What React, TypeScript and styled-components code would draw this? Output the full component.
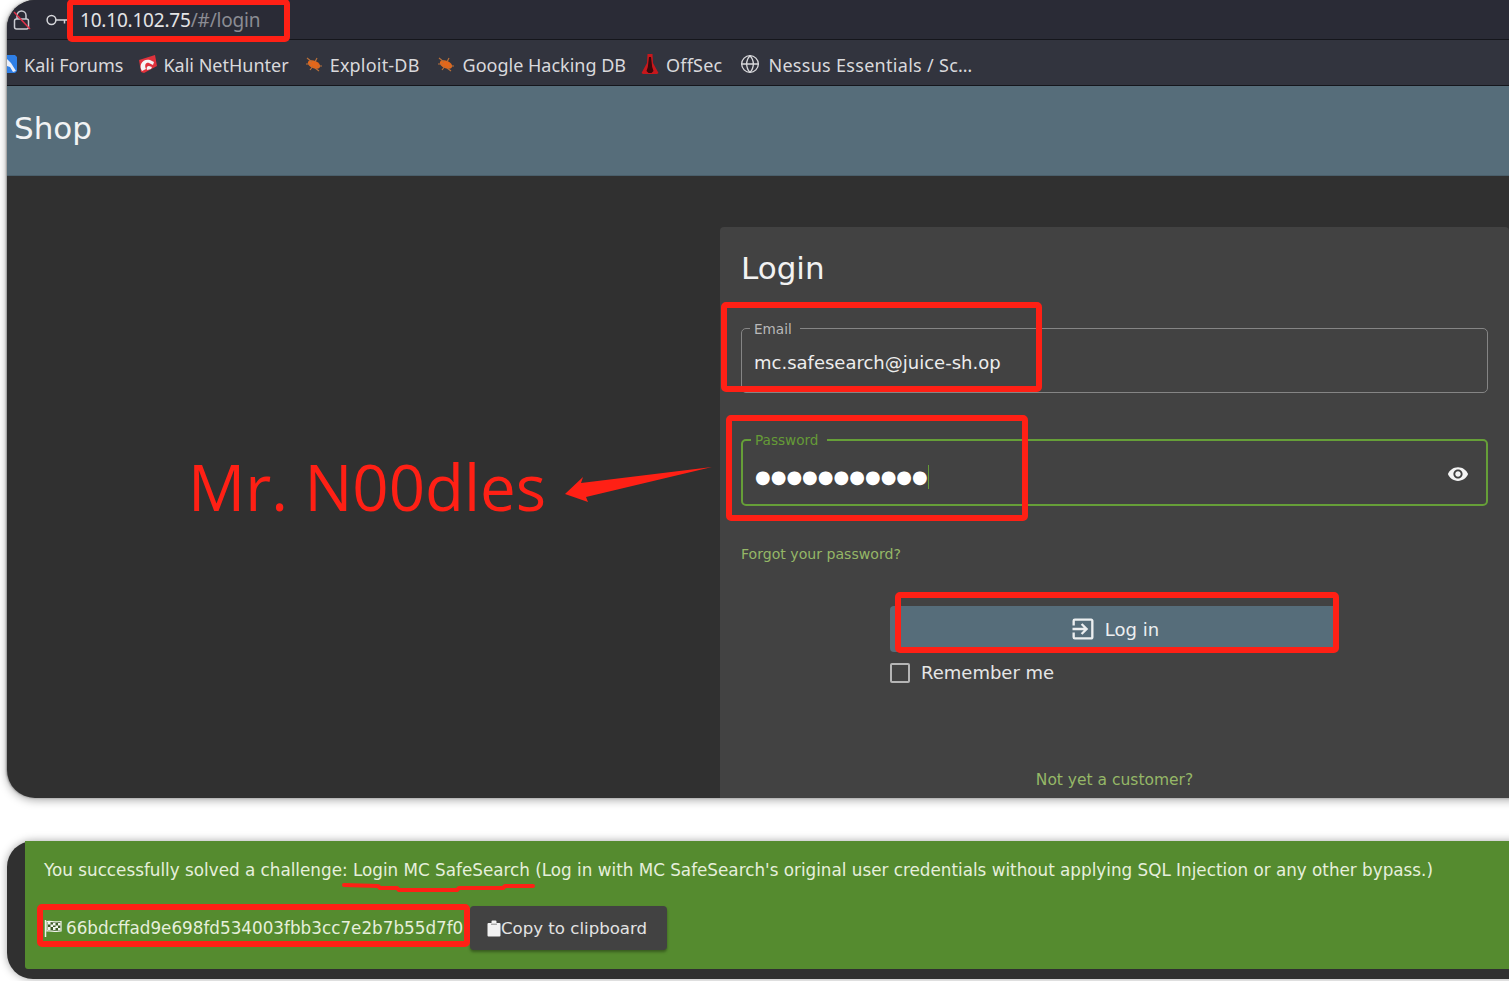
import React from "react";
import styled, { createGlobalStyle } from "styled-components";
import { Globe } from "lucide-react";
import { MdExitToApp, MdVisibility } from "react-icons/md";

const GlobalStyle = createGlobalStyle`
  html, body {
    margin: 0;
    padding: 0;
    background: #fff;
  }
  * {
    box-sizing: border-box;
  }
`;

const Page = styled.div`
  position: relative;
  width: 1509px;
  height: 981px;
  overflow: hidden;
  background: #fff;
  font-family: "DejaVu Sans", sans-serif;
  display: flex;
  flex-direction: column;
  gap: 43px;
  padding-left: 7px;
`;

const TopWindow = styled.div`
  height: 798px;
  width: 1540px;
  flex: none;
  display: flex;
  flex-direction: column;
  overflow: hidden;
  background: #303030;
  border-radius: 28px 0 0 28px;
  box-shadow: 0 2px 10px rgba(0, 0, 0, 0.35), -1px 0 2px rgba(0, 0, 0, 0.3);
`;

const AddressBar = styled.div`
  height: 40px;
  flex: none;
  display: flex;
  align-items: center;
  padding-left: 5px;
  background: #2a2b36;
  border-bottom: 1px solid #15161c;
`;

const UrlText = styled.span`
  margin-left: 12px;
  font-family: "Noto Sans", sans-serif;
  font-size: 19px;
  letter-spacing: -0.2px;
  color: #8b8c93;
`;

const UrlHost = styled.span`
  color: #e4e4e6;
`;

const BookmarkBar = styled.div`
  height: 46px;
  flex: none;
  display: flex;
  align-items: center;
  padding-top: 4px;
  background: #32343e;
  border-bottom: 1px solid #15161c;
`;

const Bookmark = styled.span<{ $gap: number; $iconGap?: number; $track?: number }>`
  display: flex;
  align-items: center;
  gap: ${(p) => p.$iconGap ?? 7}px;
  margin-right: ${(p) => p.$gap}px;
  font-family: "Noto Sans", sans-serif;
  font-size: 18px;
  letter-spacing: ${(p) => p.$track ?? 0}px;
  color: #d9d9dc;
  white-space: nowrap;

  svg {
    margin-top: -2px;
  }
`;

const ShopBar = styled.div`
  height: 90px;
  flex: none;
  display: flex;
  align-items: center;
  padding: 0 0 6px 7px;
  background: #566d7a;
  border-bottom: 1px solid #4a5f6b;
  color: #f1f3f4;
  font-size: 31px;
`;

const Content = styled.div`
  flex: 1;
  display: flex;
  padding: 51px 0 0 713px;
`;

const Card = styled.div`
  width: 789px;
  display: flex;
  flex-direction: column;
  padding: 21px 21px 0;
  background: #424242;
  border-radius: 4px 4px 0 0;
`;

const CardTitle = styled.div`
  font-size: 31px;
  line-height: 40px;
  color: #f2f2f2;
`;

const Field = styled.fieldset<{ $focused?: boolean }>`
  margin: ${(p) => (p.$focused ? "38px" : "32px")} 0 0;
  padding: ${(p) => (p.$focused ? "17px" : "15px")} 12px 0;
  height: ${(p) => (p.$focused ? "75px" : "73px")};
  min-width: 0;
  display: flex;
  align-items: flex-start;
  justify-content: space-between;
  border: ${(p) => (p.$focused ? "2px solid #669f38" : "1px solid #858585")};
  border-radius: 5px;
`;

const FieldLabel = styled.legend<{ $focused?: boolean }>`
  margin-left: -4px;
  padding: 2px 8px 0 4px;
  font-size: 13.6px;
  line-height: 15px;
  color: ${(p) => (p.$focused ? "#659b37" : "#b9b9b9")};
`;

const FieldValue = styled.div`
  display: flex;
  align-items: center;
  font-size: 18px;
  color: #ededed;
`;

const PasswordDots = styled(FieldValue)`
  color: #fff;
  border-right: 1px solid #659b37;
  line-height: 24px;
`;

const EyeButton = styled.span`
  display: flex;
  margin: -2px 5px 0 0;
  color: #f4f4f4;
`;

const ForgotLink = styled.div`
  margin-top: 40px;
  font-size: 14.1px;
  line-height: 17px;
  color: #95b767;
`;

const LoginColumn = styled.div`
  width: 448px;
  margin: 43px 0 0 149px;
  display: flex;
  flex-direction: column;
`;

const LoginButton = styled.div`
  height: 46px;
  display: flex;
  align-items: center;
  justify-content: center;
  gap: 8px;
  background: #566d7a;
  border-radius: 4px;
  color: #eceff0;
  font-size: 18px;
`;

const RememberRow = styled.div`
  margin-top: 10px;
  display: flex;
  align-items: center;
  gap: 11px;
  font-size: 18px;
  color: #e6e6e6;
`;

const CheckBox = styled.span`
  width: 20px;
  height: 20px;
  border: 2px solid #b5b5b5;
  border-radius: 2px;
`;

const CustomerLink = styled.div`
  margin-top: 88px;
  text-align: center;
  font-size: 15.5px;
  color: #95b767;
`;

const BottomWindow = styled.div`
  height: 138px;
  width: 1540px;
  flex: none;
  background: #303030;
  border-radius: 26px 0 0 26px;
  padding-left: 18px;
  box-shadow: 0 0 8px rgba(0, 0, 0, 0.35);
`;

const Toast = styled.div`
  height: 128px;
  width: 1490px;
  padding: 19px 0 0 19px;
  background: #558b2f;
  border-radius: 0 0 0 3px;
  color: #e6efdc;
  font-size: 16.8px;
`;

const ToastText = styled.div`
  line-height: 21px;
  white-space: nowrap;
`;

const FlagRow = styled.div`
  margin-top: 25px;
  display: flex;
  align-items: center;
`;

const FlagCode = styled.span`
  display: flex;
  align-items: center;
  gap: 4px;
  width: 426px;
`;

const CopyButton = styled.div`
  width: 197px;
  height: 44px;
  display: flex;
  align-items: center;
  padding-left: 17px;
  background: #424242;
  border-radius: 4px;
  box-shadow: 0 2px 3px rgba(0, 0, 0, 0.35);
  color: #e3e3e3;
  font-size: 16.6px;
`;

/* annotations drawn over the screenshot */
const RedBox = styled.div<{ $x: number; $y: number; $w: number; $h: number }>`
  position: absolute;
  left: ${(p) => p.$x}px;
  top: ${(p) => p.$y}px;
  width: ${(p) => p.$w}px;
  height: ${(p) => p.$h}px;
  border: 6px solid #ff2015;
  border-radius: 5px;
`;

const RedName = styled.div`
  position: absolute;
  left: 188px;
  top: 444px;
  font-family: "Open Sans", sans-serif;
  font-size: 63.6px;
  line-height: 86px;
  color: #ff2015;
  white-space: nowrap;
`;

const Overlay = styled.svg`
  position: absolute;
  left: 0;
  top: 0;
  pointer-events: none;
`;

const LockIcon = () => (
  <svg width="20" height="22" viewBox="0 0 20 22">
    <path d="M5 10V6.5a4.5 4.5 0 0 1 9 0V10" fill="none" stroke="#c9cad0" strokeWidth="1.5" />
    <rect x="2.500" y="10" width="14" height="10" rx="2" fill="none" stroke="#c9cad0" strokeWidth="1.5" />
    <path d="M2 3l16 17" stroke="#e0324a" strokeWidth="1.5" />
  </svg>
);

const KeyIcon = () => (
  <svg width="22" height="12" viewBox="0 0 22 12" style={{ marginLeft: 14 }}>
    <circle cx="5.5" cy="6" r="4.4" fill="none" stroke="#d5d6da" strokeWidth="1.5" />
    <path d="M10 6H21M18.500 6v3.500" fill="none" stroke="#d5d6da" strokeWidth="1.5" />
  </svg>
);

const ForumsIcon = () => (
  <svg width="10" height="20" viewBox="0 0 10 20">
    <path d="M0 1h8l2 2v14l-2 2H0z" fill="#2f7fe6" />
    <path d="M0 5l4 4 5 8-3 1-3-5-3-1z" fill="#e9eefa" />
  </svg>
);

const NetHunterIcon = () => (
  <svg width="20" height="20" viewBox="0 0 20 20">
    <path d="M1 6L17 1l2 11-13 7-3-1z" fill="#e0323c" />
    <path d="M4 17C0 11 5 4 12 6l4 2-1 3-4-2c-3-1-5 2-3 6z" fill="#f5f5f5" />
    <path d="M9 16c-1-2 0-4 2-4l3 1-1 2z" fill="#f5f5f5" />
  </svg>
);

const BugIcon = () => (
  <svg width="18" height="16" viewBox="0 0 18 16">
    <ellipse cx="9" cy="8.5" rx="6.5" ry="3.8" transform="rotate(22 9 8.500)" fill="#e4671a" />
    <path d="M2 2l5 4M1 8h5M14 15l-4-3M17 10h-5M5 14l3-4M12 2l-2 4" stroke="#b9703a" strokeWidth="1.2" />
  </svg>
);

const OffSecIcon = () => (
  <svg width="18" height="22" viewBox="0 0 18 22">
    <path d="M6.500 1h5l.5 9 5.500 10-1.500 1H2l-1.500-1L6 10z" fill="#c8171c" />
    <path d="M8 4h2l1.200 10 1.300 4-2 2H7.500l-2-2 1.300-4z" fill="#3a0a0c" />
  </svg>
);

const CheckeredFlag = () => (
  <svg width="18" height="17" viewBox="0 0 18 17">
    <path d="M1.500 0v17" stroke="#eef3ea" strokeWidth="1.5" />
    <path d="M3 1.500c4-1 7 1.500 14 0v9.500c-7 1.500-10-1-14 0z" fill="#3d5c27" stroke="#f1f5ed" strokeWidth="1.2" />
    <path d="M4 2h2.500v2.500H4zM9 3h2.500v2.500H9zM14 3h2.500v2.500H14zM6.500 4.500H9V7H6.500zM11.500 5.500H14V8h-2.500zM4 7h2.500v3H4zM9 7h2.500v3H9zM14 8h2.500v2.500H14z" fill="#f1f5ed" />
  </svg>
);

const ClipboardIcon = () => (
  <svg width="14" height="17" viewBox="0 0 14 17">
    <path d="M1.500 3H4.500V1.500a1 1 0 0 1 1-1h3a1 1 0 0 1 1 1V3h3a1 1 0 0 1 1 1v11.500a1 1 0 0 1-1 1h-11a1 1 0 0 1-1-1V4a1 1 0 0 1 1-1z" fill="#f2f2f2" />
    <path d="M4 4.200h6" stroke="#8a8a8a" strokeWidth="1" />
  </svg>
);

const App = () => {
  return (
    <Page>
      <GlobalStyle />
      <TopWindow>
        <AddressBar>
          <LockIcon />
          <KeyIcon />
          <UrlText>
            <UrlHost>10.10.102.75</UrlHost>/#/login
          </UrlText>
        </AddressBar>
        <BookmarkBar>
          <Bookmark $gap={15}>
            <ForumsIcon />
            Kali Forums
          </Bookmark>
          <Bookmark $gap={16} $iconGap={5}>
            <NetHunterIcon />
            Kali NetHunter
          </Bookmark>
          <Bookmark $gap={17} $iconGap={7} $track={0.2}>
            <BugIcon />
            Exploit-DB
          </Bookmark>
          <Bookmark $gap={15} $iconGap={8}>
            <BugIcon />
            Google Hacking DB
          </Bookmark>
          <Bookmark $gap={18} $track={0.2}>
            <OffSecIcon />
            OffSec
          </Bookmark>
          <Bookmark $gap={0} $iconGap={8} $track={0.3}>
            <Globe size={20} strokeWidth={1.6} />
            Nessus Essentials / Sc…
          </Bookmark>
        </BookmarkBar>
        <ShopBar>Shop</ShopBar>
        <Content>
          <Card>
            <CardTitle>Login</CardTitle>
            <Field>
              <FieldLabel>Email</FieldLabel>
              <FieldValue>mc.safesearch@juice-sh.op</FieldValue>
            </Field>
            <Field $focused>
              <FieldLabel $focused>Password</FieldLabel>
              <PasswordDots>●●●●●●●●●●●</PasswordDots>
              <EyeButton>
                <MdVisibility size={22} />
              </EyeButton>
            </Field>
            <ForgotLink>Forgot your password?</ForgotLink>
            <LoginColumn>
              <LoginButton>
                <MdExitToApp size={28} />
                Log in
              </LoginButton>
              <RememberRow>
                <CheckBox />
                Remember me
              </RememberRow>
            </LoginColumn>
            <CustomerLink>Not yet a customer?</CustomerLink>
          </Card>
        </Content>
      </TopWindow>
      <BottomWindow>
        <Toast>
          <ToastText>
            You successfully solved a challenge: Login MC SafeSearch (Log in with MC SafeSearch's original user
            credentials without applying SQL Injection or any other bypass.)
          </ToastText>
          <FlagRow>
            <FlagCode>
              <CheckeredFlag />
              66bdcffad9e698fd534003fbb3cc7e2b7b55d7f0
            </FlagCode>
            <CopyButton>
              <ClipboardIcon />
              Copy to clipboard
            </CopyButton>
          </FlagRow>
        </Toast>
      </BottomWindow>

      <RedBox $x={67} $y={-1} $w={223} $h={43} />
      <RedBox $x={721} $y={302} $w={321} $h={90} />
      <RedBox $x={726} $y={415} $w={302} $h={106} />
      <RedBox $x={895} $y={592} $w={444} $h={61} />
      <RedBox $x={37} $y={904} $w={433} $h={43} />
      <RedName>Mr. N00dles</RedName>
      <Overlay width="1509" height="981" viewBox="0 0 1509 981">
        <polygon points="565,494 583,477 581,483 712,467 586,497 588,502" fill="#ff2015" />
        <path
          d="M344 885 L378 886 L380 888 L397 888 L399 890 L457 890 L459 888 L503 888 L505 886 L533 886"
          fill="none"
          stroke="#ff2015"
          strokeWidth="4"
          strokeLinecap="round"
          strokeLinejoin="round"
        />
      </Overlay>
    </Page>
  );
};

export default App;
